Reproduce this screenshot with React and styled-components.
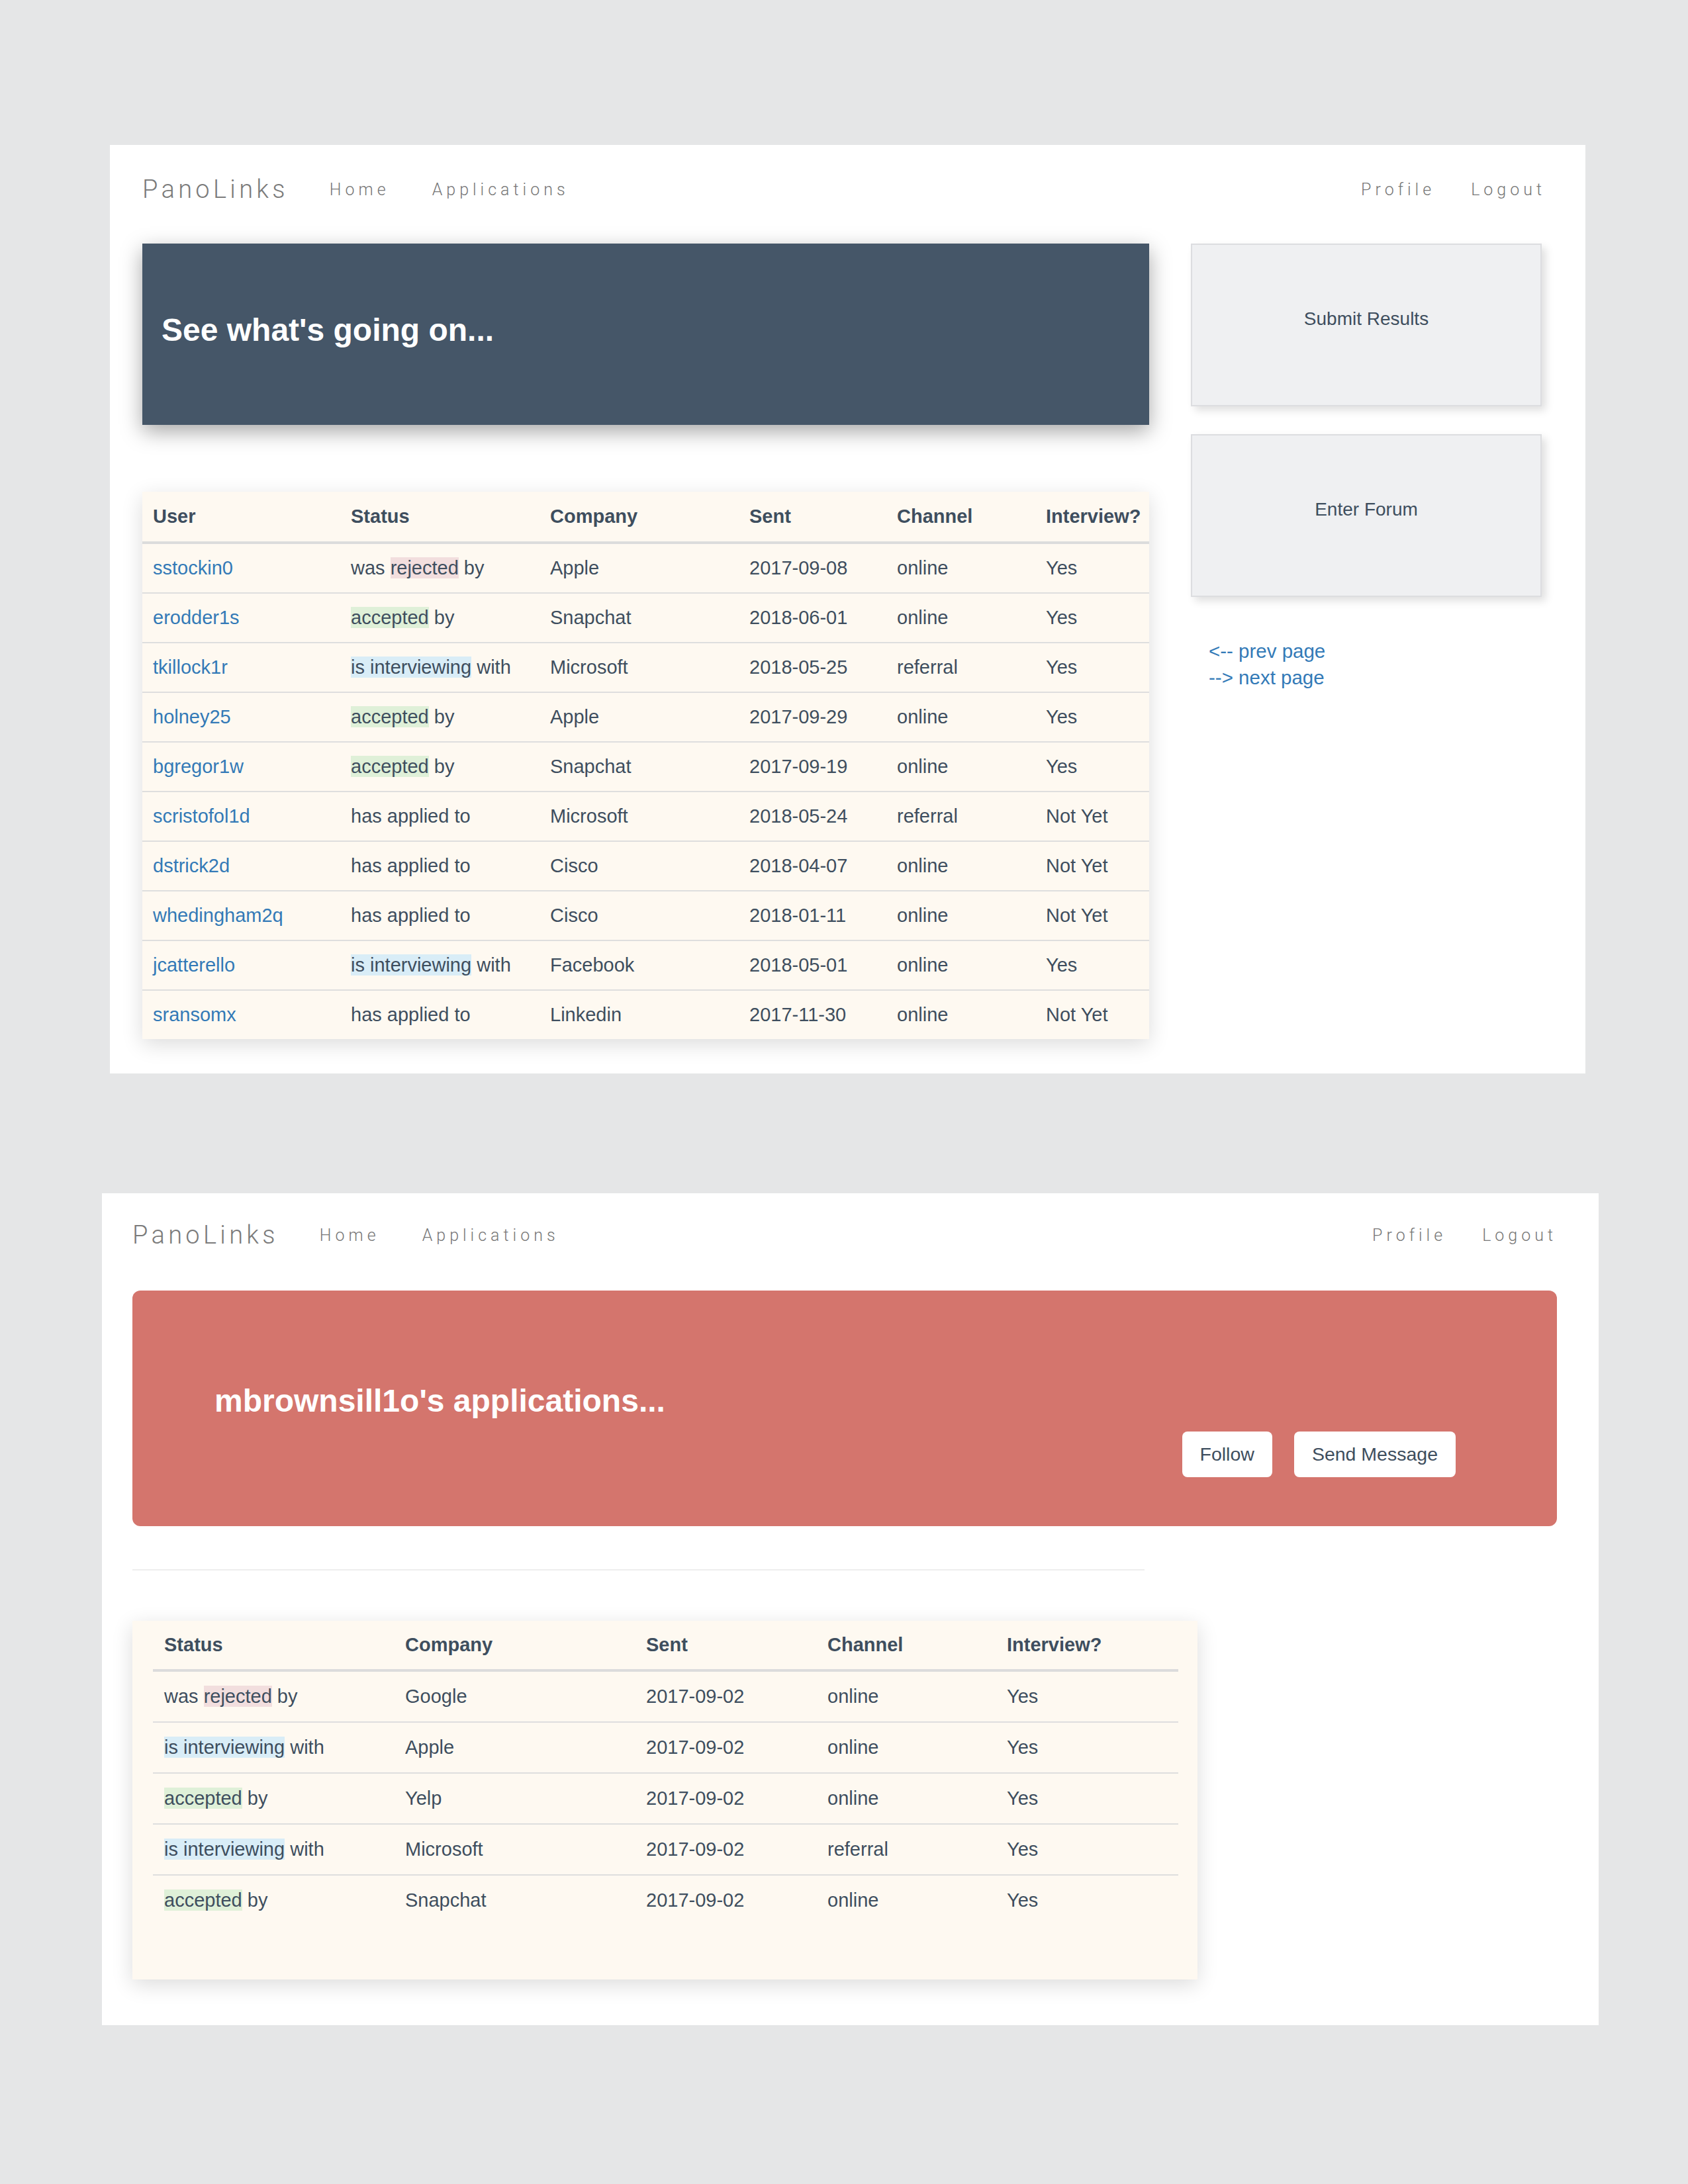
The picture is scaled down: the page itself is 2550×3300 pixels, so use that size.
import React from 'react';
import styled, { createGlobalStyle } from 'styled-components';

const GlobalStyle = createGlobalStyle`
  html, body {
    margin: 0;
    padding: 0;
    background: #e5e6e7;
  }
  body {
    font-family: "Liberation Sans", Arial, Helvetica, sans-serif;
    color: #3e4e5e;
  }
`;

const Page = styled.div`
  min-height: 3300px;
  padding-top: 219px;
  box-sizing: border-box;
  display: flex;
  flex-direction: column;
  gap: 181px;
`;

const Panel = styled.section`
  background: #fff;
  box-sizing: border-box;
  margin-left: ${(p) => p.$left}px;
  width: ${(p) => p.$width}px;
  padding: ${(p) => p.$pad};
`;

const Nav = styled.nav`
  display: flex;
  align-items: center;
  height: 54px;
  margin-bottom: ${(p) => p.$gap}px;
`;

const Brand = styled.span`
  font-family: "Roboto", "Liberation Sans", sans-serif;
  font-weight: 300;
  font-size: 38px;
  letter-spacing: 5.3px;
  color: #7b7b7b;
`;

const NavLink = styled.a`
  font-family: "Roboto", "Liberation Sans", sans-serif;
  font-weight: 300;
  font-size: 25px;
  letter-spacing: 6px;
  color: #777;
  margin-left: ${(p) => p.$gap || 64}px;
  text-decoration: none;
`;

const NavRight = styled.div`
  margin-left: auto;
  display: flex;
`;

const MainGrid = styled.div`
  display: grid;
  grid-template-columns: 1521px 530px;
  column-gap: 63px;
  align-items: start;
`;

const LeftCol = styled.div`
  display: flex;
  flex-direction: column;
  gap: 101px;
`;

const DarkHero = styled.div`
  height: 274px;
  box-sizing: border-box;
  background: #455668;
  display: flex;
  align-items: center;
  padding: 0 0 12px 29px;
  box-shadow: 0 10px 30px rgba(0, 0, 0, 0.35);
`;

const HeroTitle = styled.h1`
  margin: 0;
  color: #fff;
  font-size: 48px;
  font-weight: 700;
  line-height: 56px;
`;

const RightCol = styled.div`
  display: flex;
  flex-direction: column;
  gap: 42px;
`;

const ActionCard = styled.div`
  height: 246px;
  box-sizing: border-box;
  background: #eff0f2;
  border: 2px solid #dcdde0;
  box-shadow: 6px 6px 12px rgba(0, 0, 0, 0.13);
  display: flex;
  align-items: center;
  justify-content: center;
  padding-bottom: 18px;
  font-size: 28px;
  color: #3e4e5e;
`;

const Pager = styled.div`
  margin-top: 20px;
  padding-left: 27px;
  display: flex;
  flex-direction: column;
`;

const PagerLink = styled.a`
  color: #337ab7;
  font-size: 29.5px;
  line-height: 40px;
  text-decoration: none;
`;

const TableCard = styled.div`
  background: #fef9f1;
  box-shadow: 0 8px 30px rgba(0, 0, 0, 0.14);
  box-sizing: border-box;
  width: ${(p) => p.$width}px;
  padding: ${(p) => p.$pad};
`;

const Table = styled.table`
  width: 100%;
  border-collapse: collapse;
  table-layout: fixed;
  font-size: 29px;
`;

const Th = styled.th`
  text-align: left;
  font-weight: 700;
  color: #3e4e5e;
  line-height: 33px;
  padding: ${(p) => p.$v}px ${(p) => p.$h}px;
  border-bottom: 4px solid #dcdcdc;
  white-space: nowrap;
`;

const Td = styled.td`
  color: #3e4e5e;
  line-height: 33px;
  padding: ${(p) => p.$v}px ${(p) => p.$h}px;
  border-top: 2px solid #dedede;
  white-space: nowrap;
`;

const Row = styled.tr`
  &:first-child td {
    border-top: none;
  }
`;

const UserLink = styled.a`
  color: #337ab7;
  text-decoration: none;
`;

const Mark = styled.span`
  background: ${(p) => p.$bg};
`;

const RedHero = styled.div`
  height: 356px;
  box-sizing: border-box;
  background: #d4756d;
  border-radius: 12px;
  padding: 139px 153px 0 124px;
  display: flex;
  align-items: flex-start;
  justify-content: space-between;
`;

const HeroButtons = styled.div`
  display: flex;
  gap: 33px;
  margin-top: 74px;
`;

const WhiteButton = styled.button`
  height: 69px;
  padding: 0 ${(p) => p.$px}px;
  background: #fff;
  border: none;
  border-radius: 8px;
  font-family: "Liberation Sans", Arial, sans-serif;
  font-size: 28.5px;
  color: #3e4e5e;
`;

const Rule = styled.hr`
  width: 1529px;
  margin: 65px 0 76px 0;
  border: none;
  border-top: 2px solid #eeeeee;
`;

const STATUS = {
  rejected: ['was ', 'rejected', ' by', '#f2dede'],
  accepted: ['', 'accepted', ' by', '#dff0d8'],
  interviewing: ['', 'is interviewing', ' with', '#d9edf7'],
  applied: ['has applied to', '', '', null],
};

const Status = ({ kind }) => {
  const [pre, mark, post, bg] = STATUS[kind];
  return (
    <>
      {pre}
      {mark && <Mark $bg={bg}>{mark}</Mark>}
      {post}
    </>
  );
};

const feed = [
  ['sstockin0', 'rejected', 'Apple', '2017-09-08', 'online', 'Yes'],
  ['erodder1s', 'accepted', 'Snapchat', '2018-06-01', 'online', 'Yes'],
  ['tkillock1r', 'interviewing', 'Microsoft', '2018-05-25', 'referral', 'Yes'],
  ['holney25', 'accepted', 'Apple', '2017-09-29', 'online', 'Yes'],
  ['bgregor1w', 'accepted', 'Snapchat', '2017-09-19', 'online', 'Yes'],
  ['scristofol1d', 'applied', 'Microsoft', '2018-05-24', 'referral', 'Not Yet'],
  ['dstrick2d', 'applied', 'Cisco', '2018-04-07', 'online', 'Not Yet'],
  ['whedingham2q', 'applied', 'Cisco', '2018-01-11', 'online', 'Not Yet'],
  ['jcatterello', 'interviewing', 'Facebook', '2018-05-01', 'online', 'Yes'],
  ['sransomx', 'applied', 'Linkedin', '2017-11-30', 'online', 'Not Yet'],
];

const mine = [
  ['rejected', 'Google', '2017-09-02', 'online', 'Yes'],
  ['interviewing', 'Apple', '2017-09-02', 'online', 'Yes'],
  ['accepted', 'Yelp', '2017-09-02', 'online', 'Yes'],
  ['interviewing', 'Microsoft', '2017-09-02', 'referral', 'Yes'],
  ['accepted', 'Snapchat', '2017-09-02', 'online', 'Yes'],
];

const TopNav = ({ gap }) => (
  <Nav $gap={gap}>
    <Brand>PanoLinks</Brand>
    <NavLink $gap={62}>Home</NavLink>
    <NavLink>Applications</NavLink>
    <NavRight>
      <NavLink>Profile</NavLink>
      <NavLink $gap={54}>Logout</NavLink>
    </NavRight>
  </Nav>
);

const feedCols = [299, 301, 301, 223, 225, 172];
const mineCols = [364, 364, 274, 271, 276];

const App = () => (
  <>
    <GlobalStyle />
    <Page>
      <Panel $left={166} $width={2229} $pad="40px 60px 52px 49px">
        <TopNav gap={55} />
        <MainGrid>
          <LeftCol>
            <DarkHero>
              <HeroTitle>See what's going on...</HeroTitle>
            </DarkHero>
            <TableCard $width={1521} $pad="0">
              <Table>
                <colgroup>
                  {feedCols.map((w, i) => <col key={i} style={{ width: w }} />)}
                </colgroup>
                <thead>
                  <tr>
                    {['User', 'Status', 'Company', 'Sent', 'Channel', 'Interview?'].map((h) => (
                      <Th key={h} $v={21} $h={16}>{h}</Th>
                    ))}
                  </tr>
                </thead>
                <tbody>
                  {feed.map(([user, kind, company, sent, channel, interview]) => (
                    <Row key={user}>
                      <Td $v={20} $h={16}><UserLink>{user}</UserLink></Td>
                      <Td $v={20} $h={16}><Status kind={kind} /></Td>
                      <Td $v={20} $h={16}>{company}</Td>
                      <Td $v={20} $h={16}>{sent}</Td>
                      <Td $v={20} $h={16}>{channel}</Td>
                      <Td $v={20} $h={16}>{interview}</Td>
                    </Row>
                  ))}
                </tbody>
              </Table>
            </TableCard>
          </LeftCol>
          <RightCol>
            <ActionCard>Submit Results</ActionCard>
            <ActionCard>Enter Forum</ActionCard>
            <Pager>
              <PagerLink>&lt;-- prev page</PagerLink>
              <PagerLink>--&gt; next page</PagerLink>
            </Pager>
          </RightCol>
        </MainGrid>
      </Panel>

      <Panel $left={154} $width={2261} $pad="36px 63px 69px 46px">
        <TopNav gap={57} />
        <RedHero>
          <HeroTitle>mbrownsill1o's applications...</HeroTitle>
          <HeroButtons>
            <WhiteButton $px={27}>Follow</WhiteButton>
            <WhiteButton $px={27}>Send Message</WhiteButton>
          </HeroButtons>
        </RedHero>
        <Rule />
        <TableCard $width={1609} $pad="0 31px 82px">
          <Table>
            <colgroup>
              {mineCols.map((w, i) => <col key={i} style={{ width: w }} />)}
            </colgroup>
            <thead>
              <tr>
                {['Status', 'Company', 'Sent', 'Channel', 'Interview?'].map((h) => (
                  <Th key={h} $v={20} $h={17}>{h}</Th>
                ))}
              </tr>
            </thead>
            <tbody>
              {mine.map(([kind, company, sent, channel, interview], i) => (
                <Row key={i}>
                  <Td $v={21} $h={17}><Status kind={kind} /></Td>
                  <Td $v={21} $h={17}>{company}</Td>
                  <Td $v={21} $h={17}>{sent}</Td>
                  <Td $v={21} $h={17}>{channel}</Td>
                  <Td $v={21} $h={17}>{interview}</Td>
                </Row>
              ))}
            </tbody>
          </Table>
        </TableCard>
      </Panel>
    </Page>
  </>
);

export default App;
